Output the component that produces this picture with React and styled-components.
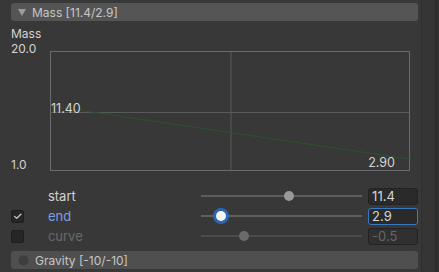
import React from "react";
import styled, { createGlobalStyle } from "styled-components";

const GlobalStyle = createGlobalStyle`
  html, body {
    margin: 0;
    padding: 0;
    background: #383838;
    overflow: hidden;
  }
  body {
    font-family: Inter, "Liberation Sans", sans-serif;
    -webkit-font-smoothing: antialiased;
  }
`;

//* ----------
//* data
//* ----------
const rows = [
  { id: "start", label: "start", value: "11.4", frac: 0.547, check: null, mode: "normal" },
  { id: "end", label: "end", value: "2.9", frac: 0.1, check: true, mode: "active" },
  { id: "curve", label: "curve", value: "-0.5", frac: 0.25, check: false, mode: "disabled" },
];

const labelColor = { normal: "#d2d2d2", active: "#7b9fe4", disabled: "#6a6a6a" };

export default function App() {
  return (
    <Page>
      <GlobalStyle />
      <Panel>
        <Foldout>
          <Triangle />
          <FoldoutText>Mass [11.4/2.9]</FoldoutText>
        </Foldout>

        <GraphArea>
          <Axis>
            <AxisTop>
              <AxisText>Mass</AxisText>
              <AxisText>20.0</AxisText>
            </AxisTop>
            <AxisText>1.0</AxisText>
          </Axis>
          <Graph>
            <svg width="358" height="118" viewBox="0 0 358 118">
              <line x1="180" y1="0" x2="180" y2="118" stroke="#5a5a5a" strokeWidth="1" />
              <line x1="0" y1="60.5" x2="358" y2="60.5" stroke="#5a5a5a" strokeWidth="1" />
              <line x1="0" y1="54" x2="358" y2="107" stroke="#2d5230" strokeWidth="1.2" />
            </svg>
            <PointLabel style={{ left: 0, top: 50 }}>11.40</PointLabel>
            <PointLabel style={{ right: 14, top: 104 }}>2.90</PointLabel>
          </Graph>
        </GraphArea>

        <Rows>
          {rows.map((r) => (
            <Row key={r.id}>
              <CheckSlot>
                {r.check !== null && <Check>{r.check ? "✓" : ""}</Check>}
              </CheckSlot>
              <Label color={labelColor[r.mode]}>{r.label}</Label>
              <Slider>
                <Track mode={r.mode} />
                <Thumb mode={r.mode} style={{ left: 5 + r.frac * 152 }} />
              </Slider>
              <Field mode={r.mode}>{r.value}</Field>
            </Row>
          ))}
        </Rows>

        <Foldout dim>
          <Dot />
          <FoldoutText>Gravity [-10/-10]</FoldoutText>
        </Foldout>
      </Panel>
      <Gutter />
      <Edge />
    </Page>
  );
}

const Page = styled.div`
  display: flex;
  width: 439px;
  height: 272px;
`;

const Panel = styled.div`
  width: 422px;
  box-sizing: border-box;
  padding: 3px 3px 0 11px;
  display: flex;
  flex-direction: column;
  border-right: 1px solid #2f2f2f;
`;

const Gutter = styled.div`
  width: 13px;
  background: #353535;
  border-right: 1px solid #292929;
`;

const Edge = styled.div`
  flex: 1;
  background: #2f2f2f;
`;

const Foldout = styled.div`
  height: 18px;
  display: flex;
  align-items: center;
  gap: 6px;
  padding-left: 7px;
  background: ${(p) => (p.dim ? "#4f4f4f" : "#555555")};
  border-radius: 3px;
  margin-top: ${(p) => (p.dim ? "5px" : "0")};
`;

const Triangle = styled.div`
  width: 0;
  height: 0;
  border-left: 4px solid transparent;
  border-right: 4px solid transparent;
  border-top: 7px solid #9c9c9c;
`;

const Dot = styled.div`
  width: 9px;
  height: 9px;
  border-radius: 50%;
  background: #3d3d3d;
  border: 1px solid #464646;
`;

const FoldoutText = styled.span`
  font-size: 12px;
  color: #c6c6c6;
`;

const GraphArea = styled.div`
  display: flex;
  margin-top: 7px;
  height: 143px;
`;

const Axis = styled.div`
  width: 39px;
  display: flex;
  flex-direction: column;
  justify-content: space-between;
`;

const AxisTop = styled.div`
  display: flex;
  flex-direction: column;
  gap: 3px;
`;

const AxisText = styled.div`
  font-size: 12px;
  line-height: 12px;
  color: #d4d4d4;
`;

const Graph = styled.div`
  position: relative;
  width: 358px;
  height: 118px;
  margin-top: 23px;
  border: 1px solid #6a6a6a;
`;

const PointLabel = styled.span`
  position: absolute;
  font-size: 12.5px;
  line-height: 13px;
  color: #d4d4d4;
`;

const Rows = styled.div`
  display: flex;
  flex-direction: column;
  margin-top: 15px;
`;

const Row = styled.div`
  display: flex;
  align-items: center;
  height: 20px;
`;

const CheckSlot = styled.div`
  width: 37px;
  display: flex;
  align-items: center;
`;

const Check = styled.div`
  width: 13px;
  height: 13px;
  box-sizing: border-box;
  border-radius: 2px;
  background: #262626;
  border: 1px solid #1e1e1e;
  color: #ececec;
  font-size: 11px;
  line-height: 11px;
  text-align: center;
`;

const Label = styled.div`
  width: 153px;
  font-size: 13px;
  color: ${(p) => p.color};
`;

const Slider = styled.div`
  position: relative;
  width: 162px;
  height: 20px;
  display: flex;
  align-items: center;
`;

const Track = styled.div`
  width: 100%;
  height: 2px;
  background: ${(p) => (p.mode === "disabled" ? "#4c4c4c" : "#5e5e5e")};
`;

const Thumb = styled.div`
  position: absolute;
  top: 50%;
  width: 10px;
  height: 10px;
  border-radius: 50%;
  transform: translate(-50%, -50%);
  background: ${(p) =>
    p.mode === "active" ? "#f4f4f4" : p.mode === "disabled" ? "#6b6b6b" : "#999999"};
  box-shadow: ${(p) => (p.mode === "active" ? "0 0 0 3px #2c67ad" : "none")};
`;

const Field = styled.div`
  margin-left: 6px;
  width: 50px;
  height: 17px;
  box-sizing: border-box;
  padding: 0 3px;
  border-radius: 3px;
  font-size: 13px;
  line-height: 15px;
  background: ${(p) => (p.mode === "disabled" ? "#303030" : "#2a2a2a")};
  border: 1px solid ${(p) => (p.mode === "active" ? "#3b79bd" : "#222222")};
  color: ${(p) => (p.mode === "disabled" ? "#666666" : "#d6d6d6")};
`;
